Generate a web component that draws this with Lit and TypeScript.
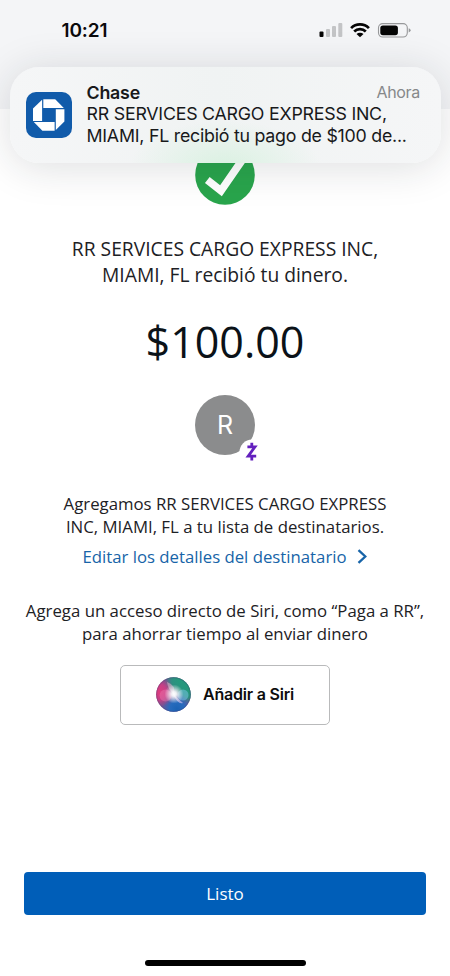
import { LitElement, html, css, svg } from "lit";
import { customElement } from "lit/decorators.js";

@customElement("status-bar")
class StatusBar extends LitElement {
  static styles = css`
    :host { display: flex; justify-content: space-between; align-items: center; height: 62px; padding: 0 39px 0 61.5px; box-sizing: border-box; }
    .time { font: 600 19px/24px Inter, sans-serif; letter-spacing: -0.1px; color: #0a0a0b; }
    .icons { display: block; position: relative; top: -1px; }
  `;
  render() {
    return html`
      <span class="time">10:21</span>
      <svg class="icons" width="92" height="16" viewBox="0 0 92 16">
        <rect x="0.5" y="9.5" width="4" height="5.5" rx="1" fill="#050505" />
        <rect x="7" y="7" width="4" height="8" rx="1" fill="#c3c4c6" />
        <rect x="13" y="4" width="4" height="11" rx="1" fill="#c3c4c6" />
        <rect x="19.3" y="1" width="4" height="14" rx="1" fill="#c3c4c6" />
        <g fill="none" stroke="#050505" stroke-width="2.7">
          <path d="M32.1 6.1A12.6 12.6 0 0 1 49.9 6.1" />
          <path d="M35.2 9.5A8.2 8.2 0 0 1 46.8 9.5" />
        </g>
        <path d="M37.5 12.1A5 5 0 0 1 44.5 12.1L41 15.2Z" fill="#050505" />
        <rect x="59.5" y="1.6" width="28.8" height="13.4" rx="4.2" fill="none" stroke="#97989a" stroke-width="1.1" />
        <rect x="61.3" y="3.4" width="17.6" height="9.8" rx="2.6" fill="#050505" />
        <path d="M89.7 6.2Q91.6 6.9 91.6 8.3T89.7 10.4Z" fill="#97989a" />
      </svg>
    `;
  }
}

@customElement("push-banner")
class PushBanner extends LitElement {
  static styles = css`
    :host {
      display: flex; align-items: center; gap: 14.5px; box-sizing: border-box;
      height: 96px; padding: 0 21px 0 16px; border-radius: 29px;
      background:
        radial-gradient(ellipse 95px 44px at 215px 98px, rgba(214, 241, 222, .8), rgba(224, 243, 231, 0)),
        linear-gradient(90deg, #f5f6f7, #f0f3f3 48%, #f5f6f7);
      box-shadow: 0 4px 42px rgba(30, 34, 40, .15);
      font-family: Inter, sans-serif; color: #18191b; text-align: left;
    }
    .logo { display: block; flex: none; }
    .copy { flex: 1; display: flex; flex-direction: column; padding-bottom: 3px; }
    .head { display: flex; justify-content: space-between; align-items: center; height: 22px; }
    .app { font-size: 17.8px; font-weight: 600; letter-spacing: -.2px; }
    .when { font-size: 16px; color: #86888a; letter-spacing: -.3px; }
    .line { font-size: 17.8px; line-height: 21.5px; white-space: nowrap; }
    .first { letter-spacing: -.22px; }
    .second { letter-spacing: -.24px; }
  `;
  render() {
    return html`
      <svg class="logo" width="46" height="46" viewBox="0 0 46 46">
        <rect width="46" height="46" rx="10" fill="#115baa" />
        <g fill="#fff">
          <path d="M17.3 7.3H29.2L37.8 16H17.3Z" />
          <path d="M38.4 17.2V29.4L29.8 38V17.2Z" />
          <path d="M28.6 38.7H16.4L7.8 30H28.6Z" />
          <path d="M7 28.9V16.6L16.1 7.8V28.9Z" />
        </g>
      </svg>
      <div class="copy">
        <div class="head"><span class="app">Chase</span><span class="when">Ahora</span></div>
        <span class="line first">RR SERVICES CARGO EXPRESS INC,</span>
        <span class="line second">MIAMI, FL recibió tu pago de $100 de...</span>
      </div>
    `;
  }
}

const siriOrb = svg`
  <defs>
    <radialGradient id="core"><stop offset="0" stop-color="#fff" /><stop offset=".25" stop-color="#fff" stop-opacity=".9" /><stop offset="1" stop-color="#fff" stop-opacity="0" /></radialGradient>
    <radialGradient id="green"><stop offset="0" stop-color="#239a7c" /><stop offset=".5" stop-color="#239a7c" stop-opacity=".85" /><stop offset="1" stop-color="#239a7c" stop-opacity="0" /></radialGradient>
    <radialGradient id="pink"><stop offset="0" stop-color="#de3c7f" /><stop offset=".5" stop-color="#d63c83" stop-opacity=".85" /><stop offset="1" stop-color="#d03b7d" stop-opacity="0" /></radialGradient>
    <radialGradient id="blue"><stop offset="0" stop-color="#1b62b4" /><stop offset=".5" stop-color="#1c6fc4" stop-opacity=".85" /><stop offset="1" stop-color="#1c6fc4" stop-opacity="0" /></radialGradient>
    <clipPath id="disc"><circle cx="17.5" cy="17.5" r="17.3" /></clipPath>
  </defs>
  <g clip-path="url(#disc)">
    <rect width="35" height="35" fill="#6a5596" />
    <circle cx="24" cy="4" r="16" fill="url(#green)" />
    <circle cx="33" cy="14" r="13" fill="url(#green)" />
    <circle cx="21" cy="32" r="15" fill="url(#blue)" />
    <circle cx="3" cy="15" r="15" fill="url(#pink)" />
    <circle cx="9.5" cy="18.5" r="6" fill="#f07fb5" opacity=".4" />
    <circle cx="27" cy="18" r="5.5" fill="#7cc6ea" opacity=".5" />
    <path d="M11 5Q20 8 18 17Q12 13 11 5Z" fill="#e6c4d6" opacity=".5" />
    <path d="M17 17L27 26Q22 28 17 17Z" fill="#e0c8f2" opacity=".6" />
    <circle cx="18" cy="17" r="9.5" fill="url(#core)" />
  </g>
  <circle cx="17.5" cy="17.5" r="16.8" fill="none" stroke="#43355f" stroke-opacity=".25" />
`;

@customElement("app-root")
class AppRoot extends LitElement {
  static styles = css`
    :host { display: flex; flex-direction: column; position: relative; width: 450px; height: 976px; overflow: hidden; background: #fff; color: #1d2125; font-family: "Open Sans", sans-serif; text-align: center; }
    .top { height: 109px; flex: none; background: #f4f5f7; }
    .banner { position: absolute; left: 10px; top: 67px; width: 431px; }
    main { display: flex; flex-direction: column; align-items: center; padding-top: 36px; flex: 1; }
    svg { display: block; flex: none; }
    .line { display: block; white-space: nowrap; }
    .title { margin-top: 31px; font-size: 19.25px; line-height: 26px; }
    .amount { margin-top: 29px; font-size: 43px; line-height: 50px; color: #0b1218; }
    .avatar { position: relative; margin-top: 28px; width: 60px; height: 60px; border-radius: 50%; background: #8b8c8d; color: #fff; font: 25px/61px Inter, sans-serif; }
    .zelle { position: absolute; left: 44px; top: 44px; }
    .note { font-size: 16.8px; line-height: 23px; }
    .added { margin-top: 36.5px; }
    .edit { display: flex; align-items: center; gap: 10px; margin-top: 7.5px; font-size: 16.75px; line-height: 23px; color: #1764a8; white-space: nowrap; }
    .hint { margin-top: 31px; }
    .siri { display: flex; align-items: center; justify-content: center; gap: 12px; box-sizing: border-box; width: 210px; height: 60px; margin-top: 19.5px; border: 1.5px solid #b9babb; border-radius: 5px; background: #fff; color: #0c0d0e; font: 600 16px/20px Inter, sans-serif; padding: 0 0 1px; }
    .siri-label { letter-spacing: -.2px; }
    .done { width: 402px; height: 43px; margin-top: auto; border: 0; border-radius: 4px; background: #005eb8; color: #fff; font: 500 17px/43px "Open Sans", sans-serif; padding: 0; }
    .home { width: 161px; height: 6px; border-radius: 3px; background: #000; margin: 45.5px 0 10px; flex: none; }
  `;
  render() {
    return html`
      <div class="top"><status-bar></status-bar></div>
      <main>
        <svg width="60" height="60" viewBox="0 0 60 60">
          <circle cx="30" cy="30" r="29.8" fill="#29a54c" />
          <path d="M12.3 35L26 45.7L49.3 12" fill="none" stroke="#fff" stroke-width="7.6" />
        </svg>
        <div class="title">
          <span class="line">RR SERVICES CARGO EXPRESS INC,</span>
          <span class="line">MIAMI, FL recibió tu dinero.</span>
        </div>
        <div class="amount">$100.00</div>
        <div class="avatar">R
          <svg class="zelle" width="26" height="26" viewBox="0 0 26 26">
            <circle cx="13" cy="13" r="12.5" fill="#fff" />
            <path d="M8.4 7.8H16L9.2 17.2H17.2M12.8 3.7V8M12.8 17V21.5" fill="none" stroke="#6320be" stroke-width="2.8" />
          </svg>
        </div>
        <div class="note added">
          <span class="line">Agregamos RR SERVICES CARGO EXPRESS</span>
          <span class="line">INC, MIAMI, FL a tu lista de destinatarios.</span>
        </div>
        <div class="edit">Editar los detalles del destinatario
          <svg width="11" height="15" viewBox="0 0 11 15"><path d="M1.5 1.2L8.3 7.5L1.5 13.8" fill="none" stroke="#1764a8" stroke-width="2.3" /></svg>
        </div>
        <div class="note hint">
          <span class="line">Agrega un acceso directo de Siri, como “Paga a RR”,</span>
          <span class="line">para ahorrar tiempo al enviar dinero</span>
        </div>
        <button class="siri"><svg width="35" height="35" viewBox="0 0 35 35">${siriOrb}</svg><span class="siri-label">Añadir a Siri</span></button>
        <button class="done">Listo</button>
        <div class="home"></div>
      </main>
      <push-banner class="banner"></push-banner>
    `;
  }
}
